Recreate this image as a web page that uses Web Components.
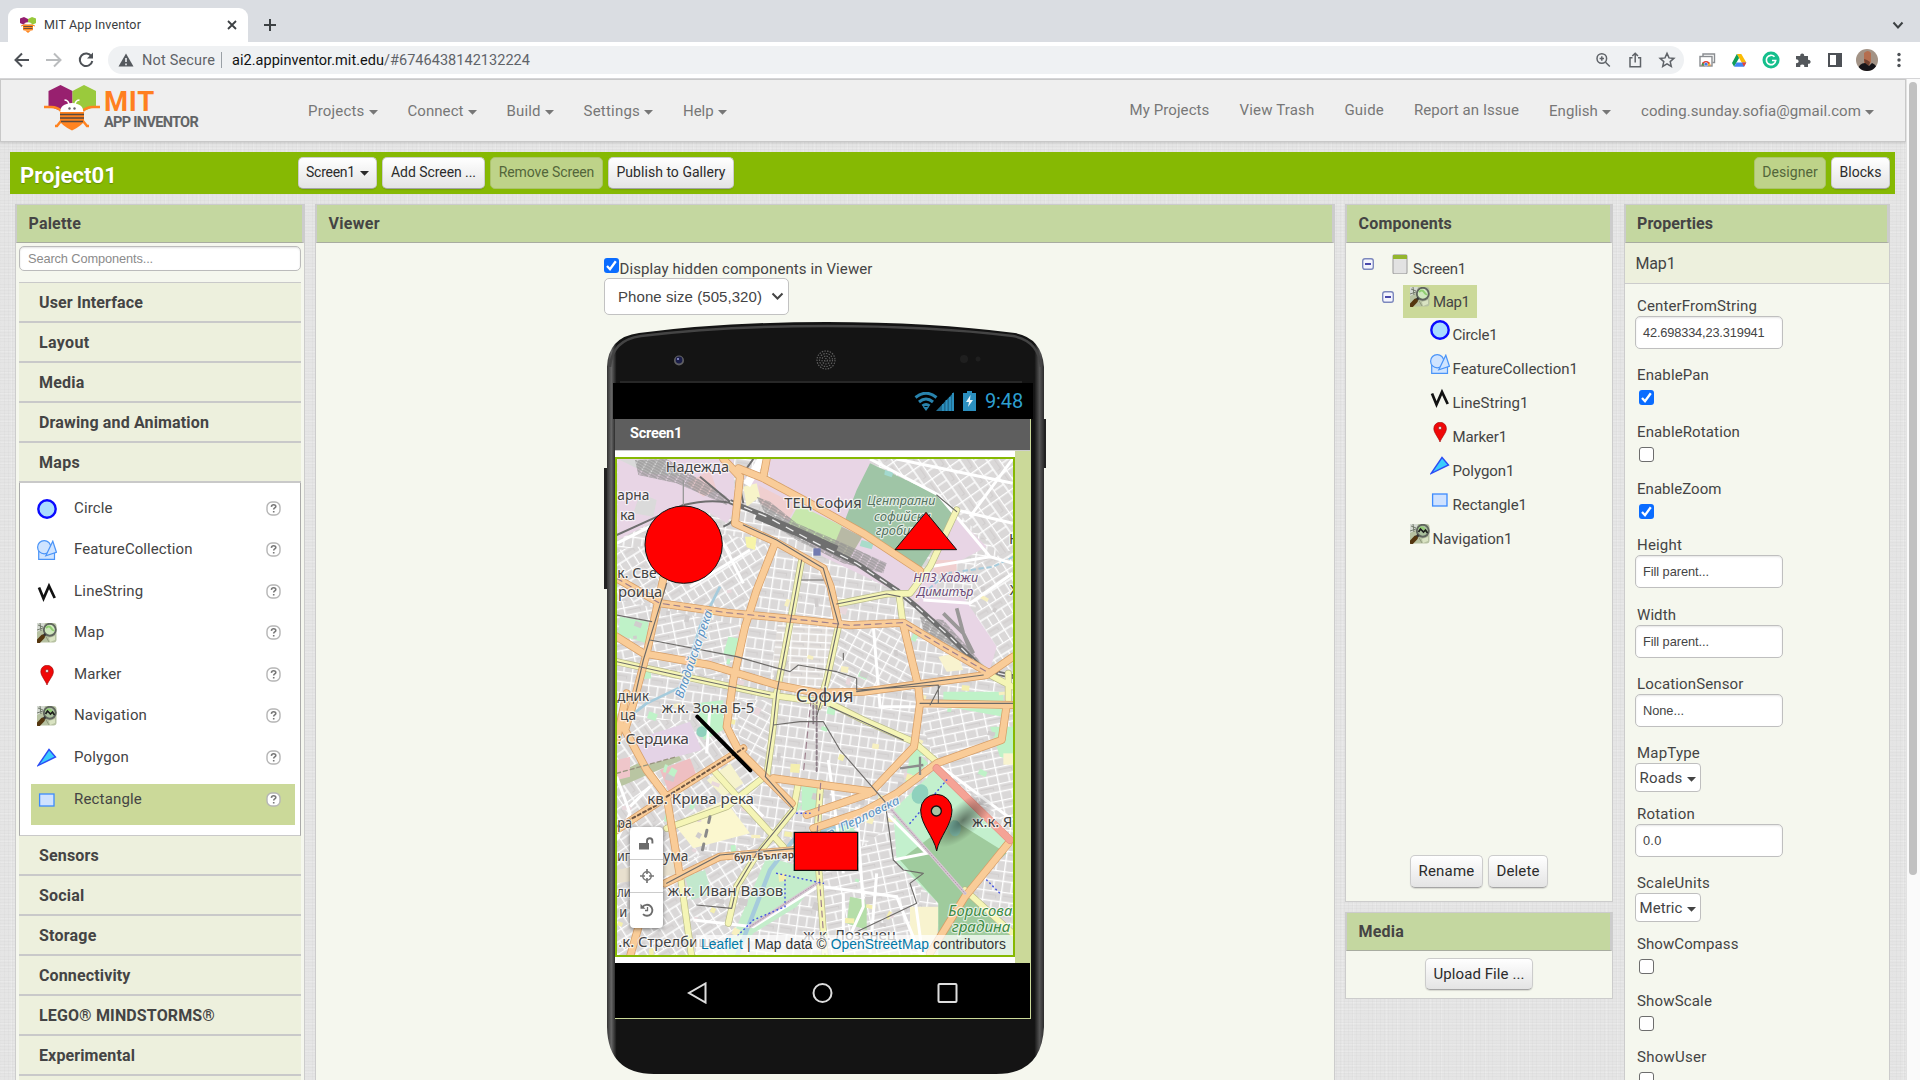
<!DOCTYPE html>
<html lang="en">
<head>
<meta charset="utf-8">
<title>MIT App Inventor</title>
<style>
html,body{margin:0;height:100%;overflow:hidden;background:#fff}
</style>
</head>
<body>
<app-window></app-window>
<script>
const BASE = `*{box-sizing:border-box} svg{display:block}`;
function define(name, render, after) {
  customElements.define(name, class extends HTMLElement {
    connectedCallback() {
      if (this.shadowRoot) return;
      const root = this.attachShadow({ mode: 'open' });
      root.innerHTML = '<style>' + BASE + '</style>' + render(this);
      if (after) after(this, root);
    }
  });
}

/* Text run with a size and an optional advance width, reached through tracking. */
define('ui-text', el => `<style>:host{display:inline-block;flex:none;white-space:pre;font-size:${el.getAttribute('s') || 15}px}</style><slot></slot>`,
  el => {
    const w = parseFloat(el.getAttribute('w'));
    if (!w) return;
    const n = el.textContent.length;
    const now = el.getBoundingClientRect().width;
    el.style.letterSpacing = ((w - now) / n).toFixed(3) + 'px';
  });

const osmGlass = nav => `
 <rect x="0" y="0" width="19.500" height="19.500" rx="3" fill="#b7c2a2"/>
 <path d="M0 0h8l-2 6-6 3z" fill="#d5dad2"/><path d="M1 2l5 2M3 0l1 8M0 7l6-2" stroke="#6a7263" stroke-width=".9"/>
 <path d="M12 15l6-2v4l-5 2z" fill="#d9e3c2"/><path d="M8 12l4 7" stroke="#879073" stroke-width=".8"/>
 <circle cx="12.800" cy="6.800" r="6" fill="${nav ? '#a9bf9d' : '#cfe8bd'}" stroke="#60655e" stroke-width="1.900"/>
 <path d="M9 5q3-3 5 0t3 2" fill="none" stroke="#8fce70" stroke-width="2"/>
 ${nav ? '<path d="M8.500 8l2-3 3 3 2-2 2 3" fill="none" stroke="#1d1d1d" stroke-width="1.700"/>' : ''}
 <path d="M8.400 11L5 14.400" stroke="#333" stroke-width="2.500"/><path d="M5.500 14L1.700 18" stroke="#54360f" stroke-width="4.500" stroke-linecap="round"/>`;
const ICONS = {
  circle: '<circle cx="10" cy="10" r="8.700" fill="#aadcff" stroke="#0a0aff" stroke-width="2.400"/>',
  feature: '<g fill="#cfe4ff" stroke="#4a94f8" stroke-width="1.200"><path d="M1.700 11.500h15.800v7.800H1.700z"/><circle cx="7.200" cy="7.200" r="6.600"/><path d="M15.800 1.200l3.600 11-10.600 3.600z"/></g>',
  line: '<path d="M2 5.500l4.500 11 5.500-12.500 5.700 12" fill="none" stroke="#111" stroke-width="2.700"/>',
  map: osmGlass(false),
  nav: osmGlass(true),
  marker: '<path d="M10 20C8.500 15.500 3.800 11 3.800 6.500a6.300 6.300 0 0 1 12.600 0C16.400 11 11.500 15.500 10 20z" fill="#f00808" stroke="#900" stroke-width=".6"/><circle cx="10" cy="6" r="1.700" fill="#e8d0d0" stroke="#800" stroke-width=".5"/>',
  polygon: '<path d="M1 17.600L12 1.500l6.500 7.500z" fill="#3bcdfc" stroke="#2a4cf5" stroke-width="1.400"/>',
  rect: '<rect x="2.600" y="4" width="14.400" height="12" fill="#cfe2ff" stroke="#3d8bfd" stroke-width="1.300"/>',
  screen: '<rect x="3" y=".8" width="14" height="19" rx="1.500" fill="#e2e2e2" stroke="#a9a9a9" stroke-width="1.200"/><path d="M3 1h14v4H3z" fill="#94b62d"/>'
};
define('ui-icon', el => `<style>:host{display:block;flex:none;width:20px;height:20px}</style><svg width="20" height="20" viewBox="0 0 20 20">${ICONS[el.getAttribute('name')]}</svg>`);

define('ui-caret', () => `<style>:host{display:block;width:9px;height:5px;flex:none}</style><svg width="9" height="5" viewBox="0 0 9 5"><path d="M0 0h9L4.500 4.700z" fill="currentColor"/></svg>`);

define('ui-check', el => `<style>:host{display:block;width:15px;height:15px;flex:none;border-radius:3px;${el.hasAttribute('on') ? 'background:#0a6cff' : 'background:#fff;border:1.200px solid #6d6d6d'}}</style>${el.hasAttribute('on') ? '<svg width="15" height="15" viewBox="0 0 15 15"><path d="M3 8l3 3.200 5.800-8" fill="none" stroke="#fff" stroke-width="2.300"/></svg>' : ''}`);

define('ui-button', el => {
  const off = el.hasAttribute('off');
  return `<style>:host{display:flex;flex:none;align-items:center;justify-content:center;gap:5px;width:${el.getAttribute('bw')}px;height:${el.getAttribute('bh') || 32}px;border-radius:5px;padding-bottom:${el.getAttribute('pb') || 2}px;box-sizing:border-box;font-size:14px;
  ${off ? 'background:#bed389;border:1px solid #abc36b;color:#53663a' : 'background:linear-gradient(#fff,#e4e4e4);border:1px solid #ccc;border-bottom-color:#a5a5a5;box-shadow:0 1px 1px rgba(0,0,0,.12);color:#2b2b2b'}}
  ::slotted(ui-caret){margin-top:2px}</style><slot></slot>`;
});

/* ---------- Browser chrome ---------- */
define('tab-strip', () => `<style>
:host{display:flex;height:42px;background:#dadde2;padding:8px 0 0 8px;align-items:flex-start;color:#3c4043;box-sizing:border-box}
.tab{display:flex;align-items:center;width:240px;height:34px;background:#fff;border-radius:9px 9px 0 0;padding:0 10px 0 12px;gap:8px}
.tab ui-text{color:#3a3c40;margin-top:-2px}.grow{flex:1}
.plus{margin:10px 0 0 15px}.chev{margin:13px 16px 0 0}
</style>
<div class="tab">
<svg width="16" height="16" viewBox="0 0 16 16"><path d="M0 1.500L4 0l4 2v5L4 8 0 6z" fill="#941f70"/><path d="M8 2l4-2 4 1.500V6l-4 2-4-1z" fill="#98c93c"/><path d="M3.500 7.500Q8 3 12.500 7.500z" fill="#fff" stroke="#ddd" stroke-width=".4"/><path d="M3.500 8h9v5h-9zM1 9l3-1M15 9l-3-1" fill="#ff8a24" stroke="#ff8a24"/><path d="M3.500 9.500h9M3.500 11.500h9" stroke="#6b5140" stroke-width="1"/><path d="M5 13.500h6L8 16z" fill="#ff8a24"/></svg>
<ui-text s="12.500" w="97">MIT App Inventor</ui-text><span class="grow"></span>
<svg width="12" height="12" viewBox="0 0 12 12"><path d="M2 2l8 8M10 2l-8 8" stroke="#3c4043" stroke-width="1.800"/></svg></div>
<svg class="plus" width="14" height="14" viewBox="0 0 14 14"><path d="M7 1v12M1 7h12" stroke="#3c4043" stroke-width="2"/></svg>
<span class="grow"></span>
<svg class="chev" width="12" height="9" viewBox="0 0 12 9"><path d="M1.500 1.500L6 6.500l4.500-5" fill="none" stroke="#3c4043" stroke-width="2"/></svg>`);

define('address-bar', () => `<style>
:host{display:flex;height:37px;background:#fff;border-bottom:1px solid #d5d5d7;align-items:center;padding:0 12px 0 13px;box-sizing:border-box;color:#5f6368}
.nav{display:flex;gap:14px;width:95px;flex:none}
.omni{display:flex;align-items:center;width:1576px;height:28px;border-radius:14px;background:#eff1f3;padding:0 8px 0 10px}
.omni ui-text{line-height:28px;margin-top:1px}.warn{margin-right:8px}.bar{width:1px;height:16px;background:#9aa0a6;margin:0 10px 0 6px}
.url{color:#5f6368}.url b{font-weight:400;color:#111}.grow{flex:1}.acts{display:flex;gap:14px}
.ext{display:flex;gap:14px;margin-left:14px;align-items:center}.ext svg,.acts svg,.nav svg{flex:none}
</style>
<div class="nav">
<svg width="18" height="18" viewBox="0 0 18 18"><path d="M16 9H3M9 2.500L2.500 9 9 15.500" fill="none" stroke="#4d5156" stroke-width="2"/></svg>
<svg width="18" height="18" viewBox="0 0 18 18"><path d="M1 9h14M9 2.500L15.500 9 9 15.500" fill="none" stroke="#babcbe" stroke-width="2"/></svg>
<svg width="18" height="18" viewBox="0 0 18 18"><path d="M14.500 5.500A6.300 6.300 0 1 0 15.300 10" fill="none" stroke="#4d5156" stroke-width="2"/><path d="M16 1.500v6h-6z" fill="#4d5156"/></svg></div>
<div class="omni"><svg class="warn" width="16" height="14" viewBox="0 0 16 14"><path d="M8 .5L15.500 13.500H.5z" fill="#55595e"/><path d="M8 5v4M8 10.500v1.700" stroke="#eff1f3" stroke-width="1.600"/></svg>
<ui-text s="14.500" w="73">Not Secure</ui-text><span class="bar"></span><ui-text class="url" s="14.500" w="298"><b>ai2.appinventor.mit.edu</b>/#6746438142132224</ui-text><span class="grow"></span>
<div class="acts">
<svg width="18" height="18" viewBox="0 0 18 18"><g fill="none" stroke="#5f6368" stroke-width="1.500"><circle cx="7.800" cy="7.500" r="4.800"/><path d="M11.500 11.200l4.300 4.300M5.600 7.500h4.400M7.800 5.300v4.400"/></g></svg>
<svg width="18" height="18" viewBox="0 0 18 18"><g fill="none" stroke="#5f6368" stroke-width="1.500"><path d="M6.500 6.700H4v9h10.500v-9H12M9.200 11.500V2.500M6.300 5L9.200 2.200 12 5"/></g></svg>
<svg width="18" height="18" viewBox="0 0 18 18"><path d="M9 2.400l2 4.500 4.900.5-3.700 3.200 1.100 4.800L9 12.900l-4.300 2.500 1.100-4.800-3.700-3.200 4.900-.5z" fill="none" stroke="#5f6368" stroke-width="1.500"/></svg></div></div>
<div class="ext">
<svg width="18" height="18" viewBox="0 0 18 18"><path d="M5 5V3h11.500v8.500h-2" fill="none" stroke="#8a8d91" stroke-width="1.400"/><rect x="2" y="5.500" width="12" height="9.500" fill="#fff" stroke="#8a8d91" stroke-width="1.400"/><path d="M3.500 14.500a4.500 4.500 0 0 1 9 0z" fill="#e23c30"/><path d="M3.500 14.500l1-3 2 3z" fill="#2ba24c"/><path d="M12.500 14.500l-1-3-2 3z" fill="#fbc117"/><circle cx="8" cy="13.200" r="1.800" fill="#3c7de8" stroke="#fff" stroke-width=".5"/></svg>
<svg width="18" height="18" viewBox="0 0 18 18"><path d="M6.800 3h4.500l5 8.500h-4.600z" fill="#fbbc04"/><path d="M6.800 3l2.300 4-5 8.700L2 12z" fill="#0f9d58"/><path d="M4.200 15.700l2.300-4.200h9.800l-2.300 4.200z" fill="#4285f4"/><path d="M16.300 11.500l-2.300 4.200-2-4.200z" fill="#ea4335"/></svg>
<svg width="18" height="18" viewBox="0 0 18 18"><circle cx="9" cy="9" r="8.500" fill="#15bf8c"/><path d="M12.500 5.800A4.700 4.700 0 1 0 13.700 9.500H10" fill="none" stroke="#fff" stroke-width="1.700"/></svg>
<svg width="18" height="18" viewBox="0 0 18 18"><path d="M2 5h4.300a2 2 0 1 1 3.800 0H14v3.900a2 2 0 1 1 0 3.800V16h-3.800a2 2 0 1 0-3.900 0H2v-4a1.900 1.900 0 1 0 0-3.500z" fill="#53575b"/></svg>
<svg width="18" height="18" viewBox="0 0 18 18"><path d="M2 2h14v14H2zM4 4v10h6V4z" fill="#4d5156" fill-rule="evenodd"/></svg>
<svg width="22" height="22" viewBox="0 0 22 22" style="margin:0 -2px"><defs><clipPath id="av"><circle cx="11" cy="11" r="11"/></clipPath></defs><g clip-path="url(#av)"><path d="M0 0h22v22H0z" fill="#a39386"/><path d="M8 4q4-4 7 0v9l-2 3-5-2z" fill="#b56e4f"/><path d="M8 10l3 1 3 2-1 4-4-2z" fill="#73412f"/><path d="M1 22q2-8 8-8l4 3 3-3q5 2 6 8z" fill="#171519"/></g></svg>
<svg width="18" height="18" viewBox="0 0 18 18"><g fill="#4d5156"><circle cx="9" cy="3.500" r="1.700"/><circle cx="9" cy="9" r="1.700"/><circle cx="9" cy="14.500" r="1.700"/></g></svg>
</div>`);

/* ---------- Page header ---------- */
define('nav-item', el => `<style>:host{display:flex;flex:none;align-items:center;gap:4px;padding:0 15px;color:#777;height:20px;${el.hasAttribute('menu') ? '' : 'margin-top:-1px'}}ui-caret{margin-top:3px}</style>
<ui-text s="15" w="${el.getAttribute('w')}">${el.getAttribute('label')}</ui-text>${el.hasAttribute('menu') ? '<ui-caret></ui-caret>' : ''}`);

define('brand-logo', () => `<style>:host{display:flex;width:249px;height:46px;flex:none;gap:4px}.t{display:flex;flex-direction:column;align-items:flex-start;font-weight:700;padding-top:5px}
.m{color:#ff7f20;line-height:24px;margin-bottom:1px}.a{color:#626466;line-height:15px;margin-top:0}</style>
<svg width="56" height="46" viewBox="0 0 56 46"><path d="M4.500 6L16.500 0l12 6v16L17 26 4.500 21z" fill="#98206f"/><path d="M28.500 6L40 0l12 6v15L40 26l-11.500-4z" fill="#9aca3c"/>
<path d="M0 22h7q7 0 10 4M56 22h-7q-7 0-10 4M17 36l-4 5h-2M39 36l4 5h2" fill="none" stroke="#ff8320" stroke-width="2.500"/>
<path d="M16.500 27q-1-8 11.500-9 12 1 11 9z" fill="#fff"/><path d="M25 19q-1-4-4.500-4M31 19q1-4 4.500-4" fill="none" stroke="#fff" stroke-width="1.500"/><circle cx="25.500" cy="23.500" r="1.200" fill="#666"/><circle cx="30.500" cy="23.500" r="1.200" fill="#666"/>
<path d="M16 27h24v9q-1 4-12 9.500Q17 40 16 36z" fill="#ff8320"/><path d="M16 29.500h24M16 33h24M17 36.500h22" stroke="#594a3f" stroke-width="1.700"/></svg>
<div class="t"><ui-text class="m" s="27.500" w="51">MIT</ui-text><ui-text class="a" s="14.500" w="94">APP INVENTOR</ui-text></div>`);

define('site-header', () => `<style>
:host{display:flex;height:63px;background:#efefef;border:1px solid #c8c8c8;padding:0 16px 0 43px;box-shadow:0 1px 2px rgba(0,0,0,.12);box-sizing:border-box}
brand-logo{margin-top:5px}.l,.r{display:flex;padding-top:21px}.r{margin-left:auto}
</style><brand-logo></brand-logo>
<div class="l">
<nav-item menu label="Projects" w="56.500"></nav-item><nav-item menu label="Connect" w="56"></nav-item><nav-item menu label="Build" w="34"></nav-item><nav-item menu label="Settings" w="56.500"></nav-item><nav-item menu label="Help" w="30.500"></nav-item></div>
<div class="r"><nav-item label="My Projects" w="80"></nav-item><nav-item label="View Trash" w="75"></nav-item><nav-item label="Guide" w="39.500"></nav-item><nav-item label="Report an Issue" w="105"></nav-item><nav-item menu label="English" w="49"></nav-item><nav-item menu label="coding.sunday.sofia@gmail.com" w="219.500"></nav-item></div>`);

define('project-bar', () => `<style>
:host{display:flex;height:42px;margin:10px 10px 0;width:1885px;background:#86b903;padding:5px 5px 0 10px;gap:5px;box-sizing:border-box}
.p{width:273px;color:#fff;font-weight:700;line-height:37px;text-shadow:0 1px 1px rgba(0,0,0,.25)}.g{flex:1}
</style><div class="p"><ui-text s="22" w="97">Project01</ui-text></div>
<ui-button bw="79"><ui-text s="14" w="49">Screen1</ui-text><ui-caret></ui-caret></ui-button>
<ui-button bw="103"><ui-text s="14" w="85">Add Screen ...</ui-text></ui-button>
<ui-button off bw="113"><ui-text s="14" w="95.500">Remove Screen</ui-text></ui-button>
<ui-button bw="126"><ui-text s="14" w="109">Publish to Gallery</ui-text></ui-button><span class="g"></span>
<ui-button off bw="72"><ui-text s="14" w="55.500">Designer</ui-text></ui-button>
<ui-button bw="59"><ui-text s="14" w="42">Blocks</ui-text></ui-button>`);

define('ui-panel', el => `<style>
:host{display:flex;flex-direction:column;flex:none;background:#f5f7ee;border:1px solid #ccc;box-sizing:border-box}
header{height:38px;flex:none;background:#c4d7a0;border-bottom:1px solid #a8aca0;border-left:1px solid #ccc;border-right:2px solid #ccc;padding-left:11.500px;color:#444;font-weight:700;line-height:37px}
</style><header><ui-text s="16" w="${el.getAttribute('tw')}">${el.getAttribute('label')}</ui-text></header><slot></slot>`);

/* ---------- Palette ---------- */
define('palette-drawer', el => `<style>:host{display:block;flex:none;height:40px;background:#edf0dd;border-bottom:2px solid #c9c9c9;padding-left:20px;line-height:40px;font-weight:700;color:#444;box-sizing:border-box}</style>${el.hasAttribute('label') ? `<ui-text s="16" w="${el.getAttribute('w')}">${el.getAttribute('label')}</ui-text>` : ''}`);
define('palette-item', el => `<style>:host{display:flex;height:41.600px;padding:0 12px 0 6px;color:#444;box-sizing:border-box;${el.hasAttribute('sel') ? 'background:#cbd999' : ''}}
ui-icon{margin-top:6px}ui-text{margin-left:17px;line-height:30px}.h{margin:8px 2px 0 auto}</style>
<ui-icon name="${el.getAttribute('icon')}"></ui-icon><ui-text s="15" w="${el.getAttribute('w')}">${el.getAttribute('label')}</ui-text>
<svg class="h" width="15" height="15" viewBox="0 0 15 15"><rect x="1" y="1" width="13" height="13" rx="5" fill="#fff" stroke="#b5b5b5" stroke-width="1.400"/><path d="M5.400 5.800q.2-2 2.200-2 2.200 0 2.200 1.700 0 1-1.200 1.500-.9.400-.9 1.600M7.700 10v1.500" fill="none" stroke="#777" stroke-width="1.600"/></svg>`);

const drawers1 = [['User Interface', 104], ['Layout', 50.5], ['Media', 45.5], ['Drawing and Animation', 170], ['Maps', 41]];
const drawers2 = [['Sensors', 60], ['Social', 45.5], ['Storage', 57.5], ['Connectivity', 91.5], ['LEGO® MINDSTORMS®', 176], ['Experimental', 96]];
const comps = [['Circle', 'circle', 38.5], ['FeatureCollection', 'feature', 118.5], ['LineString', 'line', 69.5], ['Map', 'map', 30.5], ['Marker', 'marker', 47.5], ['Navigation', 'nav', 73], ['Polygon', 'polygon', 55], ['Rectangle', 'rect', 68]];
const drawer = d => `<palette-drawer label="${d[0]}" w="${d[1]}"></palette-drawer>`;
define('palette-panel', () => `<style>
:host{display:block;width:290px;flex:none}ui-panel{height:900px}
.in{padding:3px 3px 0;display:flex;flex-direction:column}
.search{height:25px;border:1px solid #bbb;border-radius:5px;background:#fff;box-shadow:inset 0 1px 2px rgba(0,0,0,.12);margin-bottom:11px;padding-left:8px;line-height:21px;color:#8b8b8b;font-family:"Liberation Sans",Arial,sans-serif;flex:none}
.st{border-top:1px solid #c9c9c9}.box{height:353px;background:#fff;border:1px solid #aaa;border-top-width:0;border-bottom-color:#c9c9c9;padding:9.500px 5px 0 11px;flex:none}
</style><ui-panel label="Palette" tw="52.500"><div class="in"><div class="search"><ui-text s="12.800" w="125">Search Components...</ui-text></div>
<div class="st">${drawers1.map(drawer).join('')}</div>
<div class="box">${comps.map((c, i) => `<palette-item label="${c[0]}" icon="${c[1]}" w="${c[2]}" ${i == 7 ? 'sel' : ''}></palette-item>`).join('')}</div>
${drawers2.map(drawer).join('')}<palette-drawer></palette-drawer></div></ui-panel>`);

/* ---------- City map ---------- */
function cityMap() {
  let seed = 7;
  const rnd = () => (seed = (seed * 16807) % 2147483647) / 2147483647;
  const pat = (id, a, w, h, bg) => `<pattern id="${id}" width="${w}" height="${h}" patternUnits="userSpaceOnUse" patternTransform="rotate(${a})"><path d="M0 0h${w}v${h}H0z" fill="${bg || '#dad8d8'}"/><path d="M0 2h${w}M2 0v${h}M${w * .55} ${h * .5}v${h * .5}M0 ${h * .5}h${w}" stroke="#fff" stroke-width="4"/><path d="M${w * .15} ${h * .2}h${w * .6}v${h * .15}" fill="none" stroke="#d0cdcd" stroke-width="3"/></pattern>`;
  const area = (d, f) => `<path d="${d}" fill="${f}"/>`;
  let o = `<defs>${pat('pa', 8, 54, 62)}${pat('pb', 28, 58, 50)}${pat('pc', -32, 50, 60)}${pat('pd', 55, 54, 66)}${pat('pe', 3, 52, 44, '#e0dcd9')}${pat('pf', -12, 66, 50)}
<pattern id="yard" width="26" height="8" patternUnits="userSpaceOnUse" patternTransform="rotate(29)"><path d="M0 2h26M0 6h22" stroke="#949292" stroke-width="3"/></pattern>
<radialGradient id="shade"><stop offset="0" stop-color="#000" stop-opacity=".5"/><stop offset="1" stop-color="#000" stop-opacity="0"/></radialGradient></defs>`;
  o += area('M0 0h1230v1600H0z', 'url(#pa)');
  o += area('M780 57H1230V400L1040 215L985 165z', 'url(#pd)') + area('M1080 380l150-60V700L1120 660z', 'url(#pc)');
  o += area('M20 330L340 280L500 320L410 520L20 480z', 'url(#pc)') + area('M20 480L410 560L370 720L20 660z', 'url(#pf)') + area('M505 540L680 560L640 760L480 720z', 'url(#pe)') + area('M700 560L880 560L930 730L640 760z', 'url(#pb)');
  o += area('M20 840H350L470 1010L330 1180L210 1300H20z', 'url(#pd)') + area('M20 1300L600 1180L380 1560H20z', 'url(#pc)') + area('M380 780H500L470 1010L390 940z', 'url(#pb)') + area('M640 1300L980 1060L900 1560H640z', 'url(#pf)') + area('M640 850L910 910L780 1060L490 1020z', 'url(#pa)') + area('M920 800H1230V1180L980 980z', 'url(#pf)');
  // land use
  o += area('M22 57H370L375 210L350 250Q250 180 200 210L22 300z', '#e8d5e5') + area('M30 60l130 0 60 50-110-10zM90 160l50 20-10 50-60-10z', '#dadada') + area('M230 130l70-40 20 60-40 20z', '#efcdd0') + area('M460 57H785L710 240L600 180L480 110z', '#e8d5e5') + area('M400 110L480 120L870 350L940 400L1000 290L1040 230L1130 320L980 400L980 470L1060 470L1160 620L1140 690L870 460L640 350L540 250z', '#e8d5e5');
  o += area('M780 70L985 165L1040 215L930 388L860 340L705 240L740 150z', '#9fc5a6') + area('M825 90l25 8-5 14-22-8z', '#a3d9cf') + area('M565 195L697 258L672 322L535 250z', '#c8e8ad') + area('M695 260L757 290L720 352L668 325z', '#b8b9a5') + area('M445 135L560 195L535 240L450 190z', '#f0cfcf') + area('M975 360L1040 360L1040 410L970 400z', '#f0cfcf') + area('M400 140l40-10 10 40-40 30z', '#f7f4c9') + area('M755 300l36 10-6 18-36-10z', '#a9dcca') + area('M405 290l35 0-5 40-25-8z', '#f7f4a8');
  o += area('M30 530L115 545L110 610L25 585z', '#bff2c8') + area('M355 590l40 6-20 55-35-10z', '#bff2c8') + area('M1000 755h180v75l-180-32z', '#bff2c8') + area('M260 790l80-10 0 90-60 30z', '#bff2c8') + area('M985 650l55-10 20 50-50 5z', '#f8f3cf') + area('M20 1000L190 920L215 960L30 1040z', '#b9c5a2') + area('M70 900L240 845L275 930L110 975z', '#e4d3e6') + area('M150 990L240 955L262 1010L180 1065z', '#eebfc2') + area('M20 960l40-10 0 60-40 10z', '#efc6ca') + area('M190 1150L345 1080L420 1180L250 1225z', '#fbf7cf') + area('M290 1020l70-50 40 60-60 40z', '#f6f3cd') + area('M575 1030h45v80h-45z', '#bff2c8');
  o += area('M470 1250L640 1300L560 1400L430 1480L370 1560L350 1530z', '#c4edcb') + area('M20 1290L200 1250L220 1300L20 1330z', '#e8e0ce') + area('M225 1310l60-20 20 70-60 20z', '#c2e8cd') + area('M720 1370l50 10 0 90-60-20z', '#b5dea9') + area('M900 1400h90l-10 100-80 20z', '#f8f3cf') + area('M660 1160l60-10 20 30-60 20z', '#bff2c8');
  o += area('M850 1110L975 990L1200 1210L1070 1355L1230 1500V1560H985V1390L860 1265z', '#c3f0cd') + area('M870 1260L1030 1140L1190 1240L1070 1350L1230 1500V1560H985V1390z', '#9fcb9d') + area('M905 920l50 50-70 60z', '#bff2c8') + area('M1140 860h90v110l-60-20z', '#bff2c8') + area('M1180 940h30v34h-30z', '#f8f3cf');
  o += '<g fill="#8fd1bd"><ellipse cx="930" cy="1062" rx="24" ry="30" transform="rotate(25 930 1062)"/><ellipse cx="1035" cy="1165" rx="18" ry="24"/><circle cx="275" cy="875" r="16"/></g>';
  const cols = ['#f4efae', '#bff2c8', '#f7f0c0', '#d0cdcd', '#e9d8dc', '#cfcccc'];
  for (let i = 0; i < 130; i++) {
    const x = 25 + rnd() * 1180, y = 440 + rnd() * 1090;
    if (x > 850 && y > 1050) continue;
    o += `<rect x="${x.toFixed(0)}" y="${y.toFixed(0)}" width="${(9 + rnd() * 20).toFixed(0)}" height="${(8 + rnd() * 18).toFixed(0)}" fill="${cols[i % 6]}" transform="rotate(${(rnd() * 40 - 10).toFixed(0)} ${x.toFixed(0)} ${y.toFixed(0)})"/>`;
  }
  // water
  o += '<g fill="none" stroke="#a5cbdc" stroke-linejoin="round"><path d="M20 860L110 790L215 740L270 560L330 440" stroke-width="8"/><path d="M380 1550L430 1420L480 1290L550 1200L680 1160L860 1080" stroke-width="13"/><path d="M1210 350L1150 380L1010 400L930 470" stroke-width="6" stroke-dasharray="16 8"/></g>';
  // local streets
  o += `<g fill="none" stroke="#fff" stroke-width="9"><path d="M780 57L985 165L1140 350L1208 370M860 57L1208 130M1208 57L1080 230M1140 350L960 380M1208 250L1040 210M330 290L400 430M240 440L420 330M20 310L120 260M790 560L810 800L1208 800M655 960L700 1300M640 1340L860 1370L930 1540M740 1100L760 1400L700 1530M940 480L1080 490L1208 400M250 1440L430 1460L640 1330M910 1340L940 1560M830 1120L950 1240L850 1260M980 970L1208 1140M390 1060L460 1130"/><path d="M20 1010L60 1120L20 1200M120 1040L60 1100M300 800L290 940M700 1360V1540M800 1300L780 1540"/></g>
<path d="M455 57L410 135" stroke="#fff" stroke-width="24"/>`;
  // rail yards and railway
  o += area('M75 60L170 57L350 170L350 195L200 130L85 105z', 'url(#yard)') + area('M440 170L480 185L560 250L700 310L830 370L820 400L700 370L560 300L480 250z', 'url(#yard)') + area('M930 530L1000 540L1090 640L1130 690L1080 680L940 570z', 'url(#yard)');
  o += `<g fill="none" stroke="#9a9898" stroke-width="11"><path d="M1000 520L1060 580L1080 630M1040 505L1060 580L1090 640"/></g>
<g fill="none" stroke="#6f6f6f" stroke-linejoin="round"><path d="M20 285L130 235L220 195Q300 175 370 190M270 110L360 185M430 57L385 120L400 190M375 190Q390 240 340 260" stroke-width="6"/><path d="M220 200V120" stroke="#999" stroke-width="4"/><path d="M360 185L470 230L600 300L740 370L860 450L920 500L1020 590L1120 690L1210 710" stroke-width="15"/><path d="M440 225L560 275L680 330" stroke-width="26"/></g>
<path d="M360 185L470 230L600 300L740 370L860 450L920 500L1020 590L1120 690L1210 710" fill="none" stroke="#ececec" stroke-width="4" stroke-dasharray="26 20"/>`;
  // main roads
  const yellow = 'M575 360L540 550L500 760L485 900L470 1010M685 560L650 720L625 800M20 665L200 705L480 765L660 790M1040 210L960 380L900 460L830 462L680 492M868 470L880 560M310 990L400 1090L520 1220M565 1030L550 1110L430 1260L380 1340L355 1450M632 1030L620 1200L645 1545M640 780L760 840L910 905L985 970M170 1165L350 1100L470 1005M210 1300L245 1550M1065 1350L1208 1480M1195 700V780M1130 700L1208 740';
  const orange = 'M340 57L390 110L375 250L495 305L640 385L662 440L685 550M385 85L460 115L600 190L760 280L930 392M495 310L440 450L405 560L370 720L350 860L385 930L470 1015L545 1090M20 415L150 490L350 518L600 542L720 556L880 548L1000 620L1130 695M160 415L110 640L70 790L45 870L110 990L170 1070L210 1310M20 590L100 640L300 675L500 735L620 758L760 755L1130 705L1210 650M880 555L925 740L930 790L912 920L780 1060L590 1125M1210 795L935 790M1190 795L1175 900L980 970L860 1060L760 1115L610 1165M490 1015L640 1035L790 1055M20 1170L170 1070L400 925M165 1330L330 1250L560 1230M1195 1210L1065 1370L960 1540M20 900L50 760M60 1550L120 1340M470 57L460 110';
  const multi = (d, c, w, x) => `<path d="${d}" fill="none" stroke="${c}" stroke-width="${w}" stroke-linejoin="round" stroke-linecap="round" ${x || ''}/>`;
  o += multi(yellow, '#b9bb8a', 21) + multi(yellow, '#f5f5b6', 17);
  o += multi(orange, '#d79f68', 24) + multi(orange, '#f9cc98', 19.5);
  o += multi('M980 985L1200 1200', '#e58f80', 24) + multi('M980 985L1200 1200', '#f5a396', 20);
  o += multi('M20 415L150 490L350 518L600 542L720 556L880 548L1000 620L1130 695M603 780L580 1000M632 1030L620 1200L645 1545', '#9d7f8d', 3.5, 'stroke-dasharray="18 14"');
  o += multi('M845 1110L1065 1360M420 1460L620 1330', '#d6c6d2', 10) + multi('M845 1110L1065 1360M420 1460L620 1330', '#9d8697', 2, 'stroke-dasharray="4 5"');
  o += multi('M610 780V850M620 780V1000', '#8d7f88', 6, 'stroke-dasharray="9 8"') + multi('M300 1130L275 1240', '#8a8a8a', 9, 'stroke-dasharray="18 24"');
  o += multi('M170 1070L400 925M20 1160L160 1085', '#705743', 6, 'stroke-dasharray="9 9"') + multi('M20 1000L200 950', '#98947f', 4, 'stroke-dasharray="12 9"');
  // tram lines
  o += multi('M575 360L540 550L500 760L490 855L466 1010L550 1105L440 1240L380 1340L365 1405L260 1395M400 255L500 300L640 385L685 550L640 760L620 830M680 492L830 462L870 470M120 600L380 650L540 695L565 675L680 695L740 715V750L985 735V790M490 855L570 845H640L690 930L825 1085L850 1260L880 1290L940 1300L900 1330L920 1390L740 1475M20 525L125 545M20 665L200 705L480 765M170 430L100 660L70 790M930 790H1210M660 800L880 900M740 755L1120 705M170 1330L330 1245L560 1225M700 640L700 660M575 420H640M960 795L990 738M980 165L1040 215', '#6c6a68', 3.4);
  o += multi('M500 1300L640 1330M525 1320V1400L430 1440L380 1490M900 1150L1010 1020M560 1120H600M1130 1320L1170 1360', '#4656e0', 4.5, 'stroke-dasharray="2 11"');
  o += '<path d="M610 325h22v22h-22z" fill="#737bb0"/><g fill="none" stroke="#8c8c8c" stroke-width="7"><path d="M870 985L940 975M930 950V1005"/></g>';
  // labels
  const T = (x, y, w, s, t, x2) => `<text x="${x}" y="${y}" font-size="${(s * 1.1).toFixed(1)}" ${w ? `textLength="${w}" lengthAdjust="spacingAndGlyphs"` : ''} ${x2 || ''}>${t}</text>`;
  const it = c => `font-style="italic" fill="${c}"`;
  o += `<g fill="#444" stroke="#fff" stroke-opacity=".7" stroke-width="7" stroke-linejoin="round" paint-order="stroke" font-family="'Noto Sans','Open Sans',sans-serif">`
    + T(167, 96, 190, 40, 'Надежда') + T(22, 180, 96, 40, 'арна') + T(30, 240, 46, 40, 'ка') + T(22, 413, 118, 40, 'к. Све') + T(24, 472, 133, 40, 'роица') + T(523, 203, 232, 40, 'ТЕЦ София')
    + T(772, 195, 204, 36, 'Централни', it('#55745f')) + T(792, 242, 170, 36, 'софийски', it('#55745f')) + T(797, 284, 160, 36, 'гробища', it('#55745f')) + T(910, 425, 194, 36, 'НПЗ Хаджи', it('#6d4c77')) + T(920, 468, 170, 36, 'Димитър', it('#6d4c77'))
    + T(0, 0, 275, 34, 'Владайска река', it('#5b93c4') + ' transform="translate(218 777) rotate(-71)"')
    + T(557, 786, 174, 50, 'София') + T(22, 782, 95, 40, 'дник') + T(30, 840, 48, 40, 'ца') + T(155, 818, 278, 40, 'ж.к. Зона Б-5') + T(22, 913, 215, 40, ': Сердика') + T(112, 1092, 320, 40, 'кв. Крива река') + T(22, 1163, 44, 40, 'ра') + T(22, 1263, 38, 40, 'иг') + T(160, 1263, 75, 40, 'ума')
    + T(373, 1264, 200, 28, 'бул. Българи', 'font-weight="600" fill="#574a3c" transform="rotate(-3 373 1264)"') + T(173, 1368, 347, 40, 'ж.к. Иван Вазов') + T(22, 1372, 40, 40, 'ли') + T(28, 1432, 24, 40, 'и') + T(25, 1520, 304, 40, '.к. Стрелбище') + T(580, 1500, 278, 40, 'ж.к. Лозенец') + T(1087, 1160, 120, 40, 'ж.к. Я')
    + T(0, 0, 238, 33, 'р. Перловска', it('#5b93c4') + ' transform="translate(658 1194) rotate(-26)"') + T(1015, 1428, 192, 40, 'Борисова', it('#3f8c46')) + T(1025, 1477, 176, 40, 'градина', it('#3f8c46')) + T(1197, 312, 0, 40, 'К') + T(1199, 465, 0, 40, 'Ж') + '</g>';
  // drawn map features
  o += `<g stroke="#111" stroke-width="3" fill="#f00"><circle cx="221" cy="314" r="116"/><path d="M948 217L1040 329H855z"/><path d="M553 1177h190v114H553z" stroke-width="4"/></g><path d="M262 830L421 991" stroke="#000" stroke-width="12" stroke-linecap="round"/>
<ellipse cx="1060" cy="1140" rx="110" ry="48" fill="url(#shade)" transform="rotate(-42 1060 1140)"/><path d="M980 1233C972 1190 932 1155 932 1110a47 47 0 0 1 94 0C1026 1155 988 1190 980 1233z" fill="#f00" stroke="#111" stroke-width="3"/><circle cx="979" cy="1113" r="15" fill="#a9c4a3" stroke="#111" stroke-width="4"/>`;
  return o;
}
define('map-view', () => `<style>
:host{display:block;position:relative;width:400px;height:500px;border:2px solid #86b903;overflow:hidden;box-sizing:border-box}
.ctl{position:absolute;left:13px;top:368px;width:33px;height:101px;background:#fff;border-radius:4px;box-shadow:0 1px 4px rgba(0,0,0,.5);display:flex;flex-direction:column}
.ctl div{height:33px;display:flex;align-items:center;justify-content:center;border-bottom:1px solid #ccc}.ctl div:last-child{border:0}
.att{position:absolute;right:0;bottom:0;width:317px;height:20px;background:rgba(255,255,255,.72);padding-left:5px;line-height:18px;color:#333;font-family:"Liberation Sans",Arial,sans-serif}.att i{font-style:normal;color:#0078a8}
</style><svg width="396" height="496" viewBox="21 57 1188 1488">${cityMap()}</svg>
<div class="ctl"><div><svg width="15" height="13" viewBox="0 0 15 13"><path d="M0 6h10v6.500H0z" fill="#6c6c6c"/><path d="M8 6.500V4a2.700 2.700 0 0 1 5.400 0v2.500" fill="none" stroke="#6c6c6c" stroke-width="1.900"/></svg></div>
<div><svg width="14" height="14" viewBox="0 0 14 14"><circle cx="7" cy="7" r="4.200" fill="none" stroke="#777" stroke-width="1.500"/><path d="M7 0v5M7 9v5M0 7h5M9 7h5" stroke="#777" stroke-width="1.700"/></svg></div>
<div><svg width="14" height="14" viewBox="0 0 14 14"><path d="M2.500 4A5.500 5.500 0 1 1 3 11.200" fill="none" stroke="#6c6c6c" stroke-width="1.900"/><path d="M.5.800v5h5z" fill="#6c6c6c"/><path d="M7.500 4v3.500H5" fill="none" stroke="#6c6c6c" stroke-width="1.300"/></svg></div></div>
<div class="att"><ui-text s="13.800" w="305">${'<i>Leaflet</i> | Map data © <i>OpenStreetMap</i> contributors'}</ui-text></div>`);

/* ---------- Phone ---------- */
define('phone-frame', () => `<style>
:host{display:block;position:relative;width:442px;height:753px}
.shell{position:absolute;left:0;top:0}
.scr{position:relative;width:420px;margin-left:9px;padding-top:61px;height:698px;display:flex;flex-direction:column}
.status{height:36px;background:#000;display:flex;align-items:center;justify-content:flex-end;padding-right:10px;flex:none}
.status ui-text{color:#2d9fd0;margin-left:9px}.status .b{margin-left:9px}
.in{margin-left:2px;width:416px;height:600px;border-right:1px solid #cbd999;border-bottom:1px solid #cbd999;flex:none;background:#000}
.title{height:31px;background:#5e5e5e;color:#fff;font-weight:700;padding-left:15px;line-height:28px}
.row{display:flex;background:#cbd999;height:513px;border-top:1px solid #ccc}.w{background:#fff;width:400px;padding-top:6px}
.nav{display:flex;height:55px;align-items:center;padding:5px 72px 0 72px;justify-content:space-between}
</style>
<svg class="shell" width="442" height="753" viewBox="0 0 442 753"><defs><linearGradient id="e"><stop offset="0" stop-color="#333"/><stop offset=".01" stop-color="#666"/><stop offset=".022" stop-color="#141414"/><stop offset=".978" stop-color="#141414"/><stop offset=".99" stop-color="#555"/><stop offset="1" stop-color="#2b2b2b"/></linearGradient></defs>
<path d="M0 146h4v121H0zM438 97h4v49h-4z" fill="#222"/>
<path d="M3 45Q4 15 35 11Q120 0 223 0T411 11Q438 16 440 45V705Q438 752 392 752H50Q4 752 3 705z" fill="url(#e)"/>
<path d="M6 45Q8 18 37 14Q120 4 223 4T409 14Q435 19 437 45" fill="none" stroke="#444" stroke-width="2.500"/>
<path d="M16 60h402" stroke="#3a3a3a"/><circle cx="75" cy="38.500" r="5" fill="#606063"/><circle cx="75" cy="38" r="3.400" fill="#1a1d48"/><circle cx="74" cy="37" r="1" fill="#9a9ad8"/>
<g fill="none" stroke="#5e5e5e" stroke-width="1.200" stroke-dasharray="1.500 1.200"><circle cx="222" cy="38" r="9"/><circle cx="222" cy="38" r="6.500"/><circle cx="222" cy="38" r="4"/><circle cx="222" cy="38" r="1.500"/></g><g fill="#1f1f1f"><circle cx="360" cy="37" r="4"/><circle cx="374" cy="37" r="2.500"/></g></svg>
<div class="scr"><div class="status">
<svg width="24" height="19" viewBox="0 0 24 19"><g fill="none" stroke="#2883ad" stroke-width="3"><path d="M1.500 5.500Q12-3 22.500 5.500M5 10Q12 4 19 10M8.500 14Q12 11 15.500 14"/></g><path d="M12 19l-3-4h6z" fill="#2883ad"/></svg>
<svg width="18" height="19" viewBox="0 0 18 19" style="margin-left:-2px"><path d="M0 19L18 0v19z" fill="#1f6b8f"/><path d="M7 12v7M10.500 8v11M14 5v14M17 1v18" stroke="#2d93c2" stroke-width="1.800"/></svg>
<svg class="b" width="13" height="20" viewBox="0 0 13 20"><path d="M4 0h5v2h4v18H0V2h4z" fill="#2b8fbf"/><path d="M7.500 4L3 11h3l-1 5 5-7H7z" fill="#e8f6fc"/></svg>
<ui-text s="20" w="38">9:48</ui-text></div>
<div class="in"><div class="title"><ui-text s="14.500" w="52">Screen1</ui-text></div><div class="row"><div class="w"><map-view></map-view></div></div>
<div class="nav"><svg width="21" height="22" viewBox="0 0 21 22"><path d="M18.500 1.500v19L2 11z" fill="none" stroke="#ddd" stroke-width="2"/></svg><svg width="21" height="22" viewBox="0 0 21 22"><circle cx="10.500" cy="11" r="9" fill="none" stroke="#ddd" stroke-width="2"/></svg><svg width="21" height="22" viewBox="0 0 21 22"><rect x="1.500" y="2" width="18" height="18" rx="1" fill="none" stroke="#ddd" stroke-width="2"/></svg></div></div></div>`);

define('viewer-panel', () => `<style>:host{display:block;flex:none;width:1020px}ui-panel{height:900px}
.in{padding-left:288px;padding-top:15px;color:#444;display:flex;flex-direction:column}
.c{display:flex;height:20px;gap:.5px}.c ui-text{line-height:22px}
.sel{width:185px;height:37px;border:1px solid #c2c2c2;border-radius:5px;background:#fff;display:flex;align-items:center;padding:0 4px 0 13px;justify-content:space-between;font-family:"Liberation Sans",Arial,sans-serif;margin-bottom:7px}
</style><ui-panel label="Viewer" tw="51.500"><div class="in"><div class="c"><ui-check on></ui-check><ui-text s="15" w="253">Display hidden components in Viewer</ui-text></div>
<div class="sel"><ui-text s="15" w="144">Phone size (505,320)</ui-text><svg width="13" height="9" viewBox="0 0 13 9"><path d="M1.500 1.500l5 5 5-5" fill="none" stroke="#444" stroke-width="2"/></svg></div><phone-frame></phone-frame></div></ui-panel>`);

/* ---------- Component tree ---------- */
define('tree-node', el => `<style>:host{display:flex;height:${el.getAttribute('h') || 34}px;padding-left:${el.getAttribute('ind')}px;box-sizing:border-box;color:#444;align-items:center}
.m{margin:-9px 9px 0 0;flex:none}.b{display:flex;align-items:center;height:33px;padding:0 7px;gap:3px;${el.hasAttribute('sel') ? 'background:#cbd999' : ''}}ui-icon{margin-top:-10px}</style>
${el.hasAttribute('open') ? '<svg class="m" width="12" height="12" viewBox="0 0 12 12"><rect x=".7" y=".7" width="10.600" height="10.600" rx="2.200" fill="#f4f5fd" stroke="#7c88bd" stroke-width="1.400"/><path d="M3 6h6" stroke="#2a2a9c" stroke-width="1.700"/></svg>' : ''}
<div class="b"><ui-icon name="${el.getAttribute('icon')}"></ui-icon><ui-text s="15" w="${el.getAttribute('w')}">${el.getAttribute('label')}</ui-text></div>`);

define('component-column', () => `<style>:host{display:flex;flex-direction:column;gap:10px;flex:none;width:268px}
.c{height:698px}.tree{padding-top:9px;height:612px;box-sizing:border-box;flex:none}.btns{display:flex;gap:5px;padding-left:64px}.m{height:87px}.up{padding:7px 0 0 79px}
</style><ui-panel class="c" label="Components" tw="93.500"><div class="tree">
<tree-node open h="33" ind="16" icon="screen" label="Screen1" w="53"></tree-node>
<tree-node open sel h="33" ind="36" icon="map" label="Map1" w="36.500"></tree-node>
<tree-node h="34" ind="76.500" icon="circle" label="Circle1" w="45"></tree-node>
<tree-node ind="76.500" icon="feature" label="FeatureCollection1" w="125.500"></tree-node>
<tree-node ind="76.500" icon="line" label="LineString1" w="76"></tree-node>
<tree-node ind="76.500" icon="marker" label="Marker1" w="54.500"></tree-node>
<tree-node ind="76.500" icon="polygon" label="Polygon1" w="62"></tree-node>
<tree-node ind="76.500" icon="rect" label="Rectangle1" w="74.500"></tree-node>
<tree-node ind="56.500" icon="nav" label="Navigation1" w="80"></tree-node></div>
<div class="btns"><ui-button bw="73" bh="33" pb="1"><ui-text s="15" w="56">Rename</ui-text></ui-button><ui-button bw="60" bh="33" pb="1"><ui-text s="15" w="43">Delete</ui-text></ui-button></div></ui-panel>
<ui-panel class="m" label="Media" tw="45.500"><div class="up"><ui-button bw="108" pb="1"><ui-text s="15" w="91">Upload File ...</ui-text></ui-button></div></ui-panel>`);

/* ---------- Properties ---------- */
define('prop-row', el => {
  const k = el.getAttribute('kind'), v = el.getAttribute('value'), vw = el.getAttribute('vw');
  const body = k == 'text' ? `<div class="t"><ui-text s="12.800" w="${vw}">${v}</ui-text></div>` : k == 'menu' ? `<div class="d"><ui-text s="15" w="${vw}">${v}</ui-text><ui-caret></ui-caret></div>` : `<ui-check ${k == 'on' ? 'on' : ''}></ui-check>`;
  return `<style>:host{display:block;flex:none;height:${el.getAttribute('h')}px;color:#444}.l{height:20px;line-height:20px;padding-left:2.500px}
.t{width:148px;height:33px;border:1px solid #bfbfbf;border-radius:5px;background:#fff;box-shadow:inset 0 1px 2px rgba(0,0,0,.1);padding-left:7.500px;line-height:29px;font-family:"Liberation Sans",Arial,sans-serif}
.t ui-text{margin-top:-1px}
.d{width:66px;height:29px;border:1px solid #bfbfbf;border-radius:4px;background:#fff;display:flex;align-items:center;padding-left:4px;gap:4px}.d ui-caret{margin-top:3px}
ui-check{margin:5px 0 0 4px}</style><div class="l"><ui-text s="15" w="${el.getAttribute('w')}">${el.getAttribute('label')}</ui-text></div>${body}`;
});
const props = [['CenterFromString', 120, 69, 'text', '42.698334,23.319941', 121.5], ['EnablePan', 72, 57, 'on'], ['EnableRotation', 103, 57, 'off'], ['EnableZoom', 84.5, 56, 'on'], ['Height', 45, 70, 'text', 'Fill parent...', 66], ['Width', 39, 69, 'text', 'Fill parent...', 66], ['LocationSensor', 106.5, 69, 'text', 'None...', 41], ['MapType', 63, 61, 'menu', 'Roads', 43], ['Rotation', 58, 69, 'text', '0.0', 18.5], ['ScaleUnits', 73, 61, 'menu', 'Metric', 43], ['ShowCompass', 101.5, 57, 'off'], ['ShowScale', 75, 56, 'off'], ['ShowUser', 69.5, 57, 'off']];
define('properties-panel', () => `<style>:host{display:block;flex:none;width:266px}ui-panel{height:900px}
.n{height:41px;background:#edf0dd;border-bottom:1px solid #ccc;padding-left:11px;line-height:41px;color:#444;flex:none}.in{padding:12px 0 0 10px}
</style><ui-panel label="Properties" tw="76"><div class="n"><ui-text s="16" w="40">Map1</ui-text></div><div class="in">
${props.map(p => `<prop-row label="${p[0]}" w="${p[1]}" h="${p[2]}" kind="${p[3]}" value="${p[4] || ''}" vw="${p[5] || ''}"></prop-row>`).join('')}</div></ui-panel>`);

define('app-window', () => `<style>
:host{display:flex;flex-direction:column;width:1920px;height:1080px;overflow:hidden;font-family:Roboto,"Liberation Sans",sans-serif;color:#444}
.view{display:flex;flex:1;min-height:0}
.page{width:1906px;overflow:hidden;flex:none;background-color:#e5e5e5;background-image:repeating-linear-gradient(0deg,rgba(0,0,0,.018) 0 1px,transparent 1px 3px),repeating-linear-gradient(90deg,rgba(0,0,0,.018) 0 1px,transparent 1px 4px),repeating-linear-gradient(0deg,rgba(255,255,255,.14) 0 1px,transparent 1px 7px),repeating-linear-gradient(90deg,rgba(255,255,255,.14) 0 1px,transparent 1px 11px)}
.cols{display:flex;gap:10px;padding:10px 0 0 15px;align-items:flex-start}
properties-panel{margin-left:.5px}
.sb{width:14px;background:#fafafa;border-left:1px solid #e2e2e2;padding:3px 0 0 2px;box-sizing:border-box}.th{width:8px;height:793px;border-radius:4px;background:#c1c1c1}
</style><tab-strip></tab-strip><address-bar></address-bar>
<div class="view"><div class="page"><site-header></site-header><project-bar></project-bar>
<div class="cols"><palette-panel></palette-panel><viewer-panel></viewer-panel><component-column></component-column><properties-panel></properties-panel></div></div>
<div class="sb"><div class="th"></div></div></div>`);
</script>
</body>
</html>
